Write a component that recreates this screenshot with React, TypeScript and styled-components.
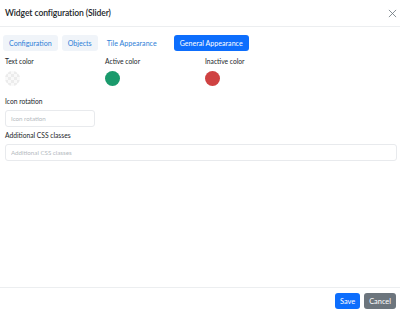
import styled, { createGlobalStyle } from 'styled-components';

const Global = createGlobalStyle`
  html, body {
    margin: 0;
    padding: 0;
    background: #fff;
  }
  body {
    font-family: Lato, "Noto Sans", sans-serif;
    color: #212529;
  }
`

const tabs = [
    { label: 'Configuration', kind: 'soft', gap: 0 },
    { label: 'Objects', kind: 'soft', gap: 4 },
    { label: 'Tile Appearance', kind: 'plain', gap: 9 },
    { label: 'General Appearance', kind: 'active', gap: 17 },
] as const

function App() {
    return (
        <Modal>
            <Global />
            <Header>
                <Title>Widget configuration (Slider)</Title>
                <Close aria-label="close">
                    <svg width="9" height="9" viewBox="0 0 10 10">
                        <path d="M1 1 L9 9 M9 1 L1 9" stroke="#6c757d" strokeWidth="0.9" fill="none" />
                    </svg>
                </Close>
            </Header>
            <Body>
                <Tabs>
                    {tabs.map(t => (
                        <Tab key={t.label} $kind={t.kind} $gap={t.gap}>{t.label}</Tab>
                    ))}
                </Tabs>
                <ColorRow>
                    <ColorField>
                        <Label>Text color</Label>
                        <Swatch $empty />
                    </ColorField>
                    <ColorField>
                        <Label>Active color</Label>
                        <Swatch $color="#1a9a6c" />
                    </ColorField>
                    <ColorField>
                        <Label>Inactive color</Label>
                        <Swatch $color="#cf4242" />
                    </ColorField>
                </ColorRow>
                <Field>
                    <Label>Icon rotation</Label>
                    <Input $width="90px" placeholder="Icon rotation" />
                </Field>
                <Field>
                    <Label>Additional CSS classes</Label>
                    <Input placeholder="Additional CSS classes" />
                </Field>
            </Body>
            <Footer>
                <Button $variant="primary">Save</Button>
                <Button $variant="secondary">Cancel</Button>
            </Footer>
        </Modal>
    )
}
export default App

const Modal = styled.div`
    width: 400px;
    height: 314px;
    display: flex;
    flex-direction: column;
    box-sizing: border-box;
`

const Header = styled.div`
    height: 27px;
    box-sizing: border-box;
    padding: 0 3px 0 5px;
    display: flex;
    align-items: center;
    justify-content: space-between;
    border-bottom: 1px solid #eceef0;
`

const Title = styled.h5`
    margin: 0;
    font-size: 8.6px;
    font-weight: 600;
    letter-spacing: -0.1px;
    color: #212529;
`

const Close = styled.button`
    border: none;
    background: none;
    padding: 0;
    display: flex;
    cursor: pointer;
`

const Body = styled.div`
    flex: 1;
    padding: 8px 3px 0 5px;
`

const Tabs = styled.div`
    display: flex;
    align-items: center;
    margin-left: -2px;
    margin-bottom: 5px;
`

const Tab = styled.button<{ $kind: 'soft' | 'plain' | 'active'; $gap: number }>`
    border: none;
    border-radius: 3px;
    height: 16px;
    margin-left: ${p => p.$gap}px;
    padding: ${p => (p.$kind === 'plain' ? '0' : '0 6px')};
    font-family: inherit;
    font-size: 7.1px;
    cursor: pointer;
    color: ${p => (p.$kind === 'active' ? '#fff' : '#2f7fd8')};
    background: ${p =>
        p.$kind === 'active' ? '#0d6efd' : p.$kind === 'soft' ? '#f0f4f9' : 'transparent'};
`

const ColorRow = styled.div`
    display: grid;
    grid-template-columns: 100px 100px 100px;
    margin-bottom: 10px;
`

const ColorField = styled.div`
    display: flex;
    flex-direction: column;
`

const Label = styled.label`
    font-size: 6.7px;
    color: #212529;
    line-height: 10px;
    margin-bottom: 4px;
`

const Swatch = styled.div<{ $color?: string; $empty?: boolean }>`
    width: 15px;
    height: 15px;
    margin-top: 1px;
    border-radius: 50%;
    background: ${p =>
        p.$empty
            ? 'repeating-conic-gradient(#ececec 0 25%, #f9f9f9 0 50%) 0 0 / 6px 6px'
            : p.$color};
`

const Field = styled.div`
    display: flex;
    flex-direction: column;
    margin-bottom: 3px;
`

const Input = styled.input<{ $width?: string }>`
    width: ${p => p.$width || '100%'};
    height: 17px;
    box-sizing: border-box;
    border: 1px solid #e8eaed;
    border-radius: 3px;
    padding: 0 5px;
    font-family: inherit;
    font-size: 6.2px;
    outline: none;

    &::placeholder {
        color: #b4b9be;
    }
`

const Footer = styled.div`
    height: 27px;
    box-sizing: border-box;
    border-top: 1px solid #eceef0;
    display: flex;
    align-items: center;
    justify-content: flex-end;
    padding: 0 4px;

    button + button {
        margin-left: 4px;
    }
`

const Button = styled.button<{ $variant: 'primary' | 'secondary' }>`
    border: none;
    border-radius: 3px;
    height: 16px;
    padding: 0 5px;
    font-family: inherit;
    font-size: 7.4px;
    color: #fff;
    cursor: pointer;
    background: ${p => (p.$variant === 'primary' ? '#0d6efd' : '#6c757d')};
`
